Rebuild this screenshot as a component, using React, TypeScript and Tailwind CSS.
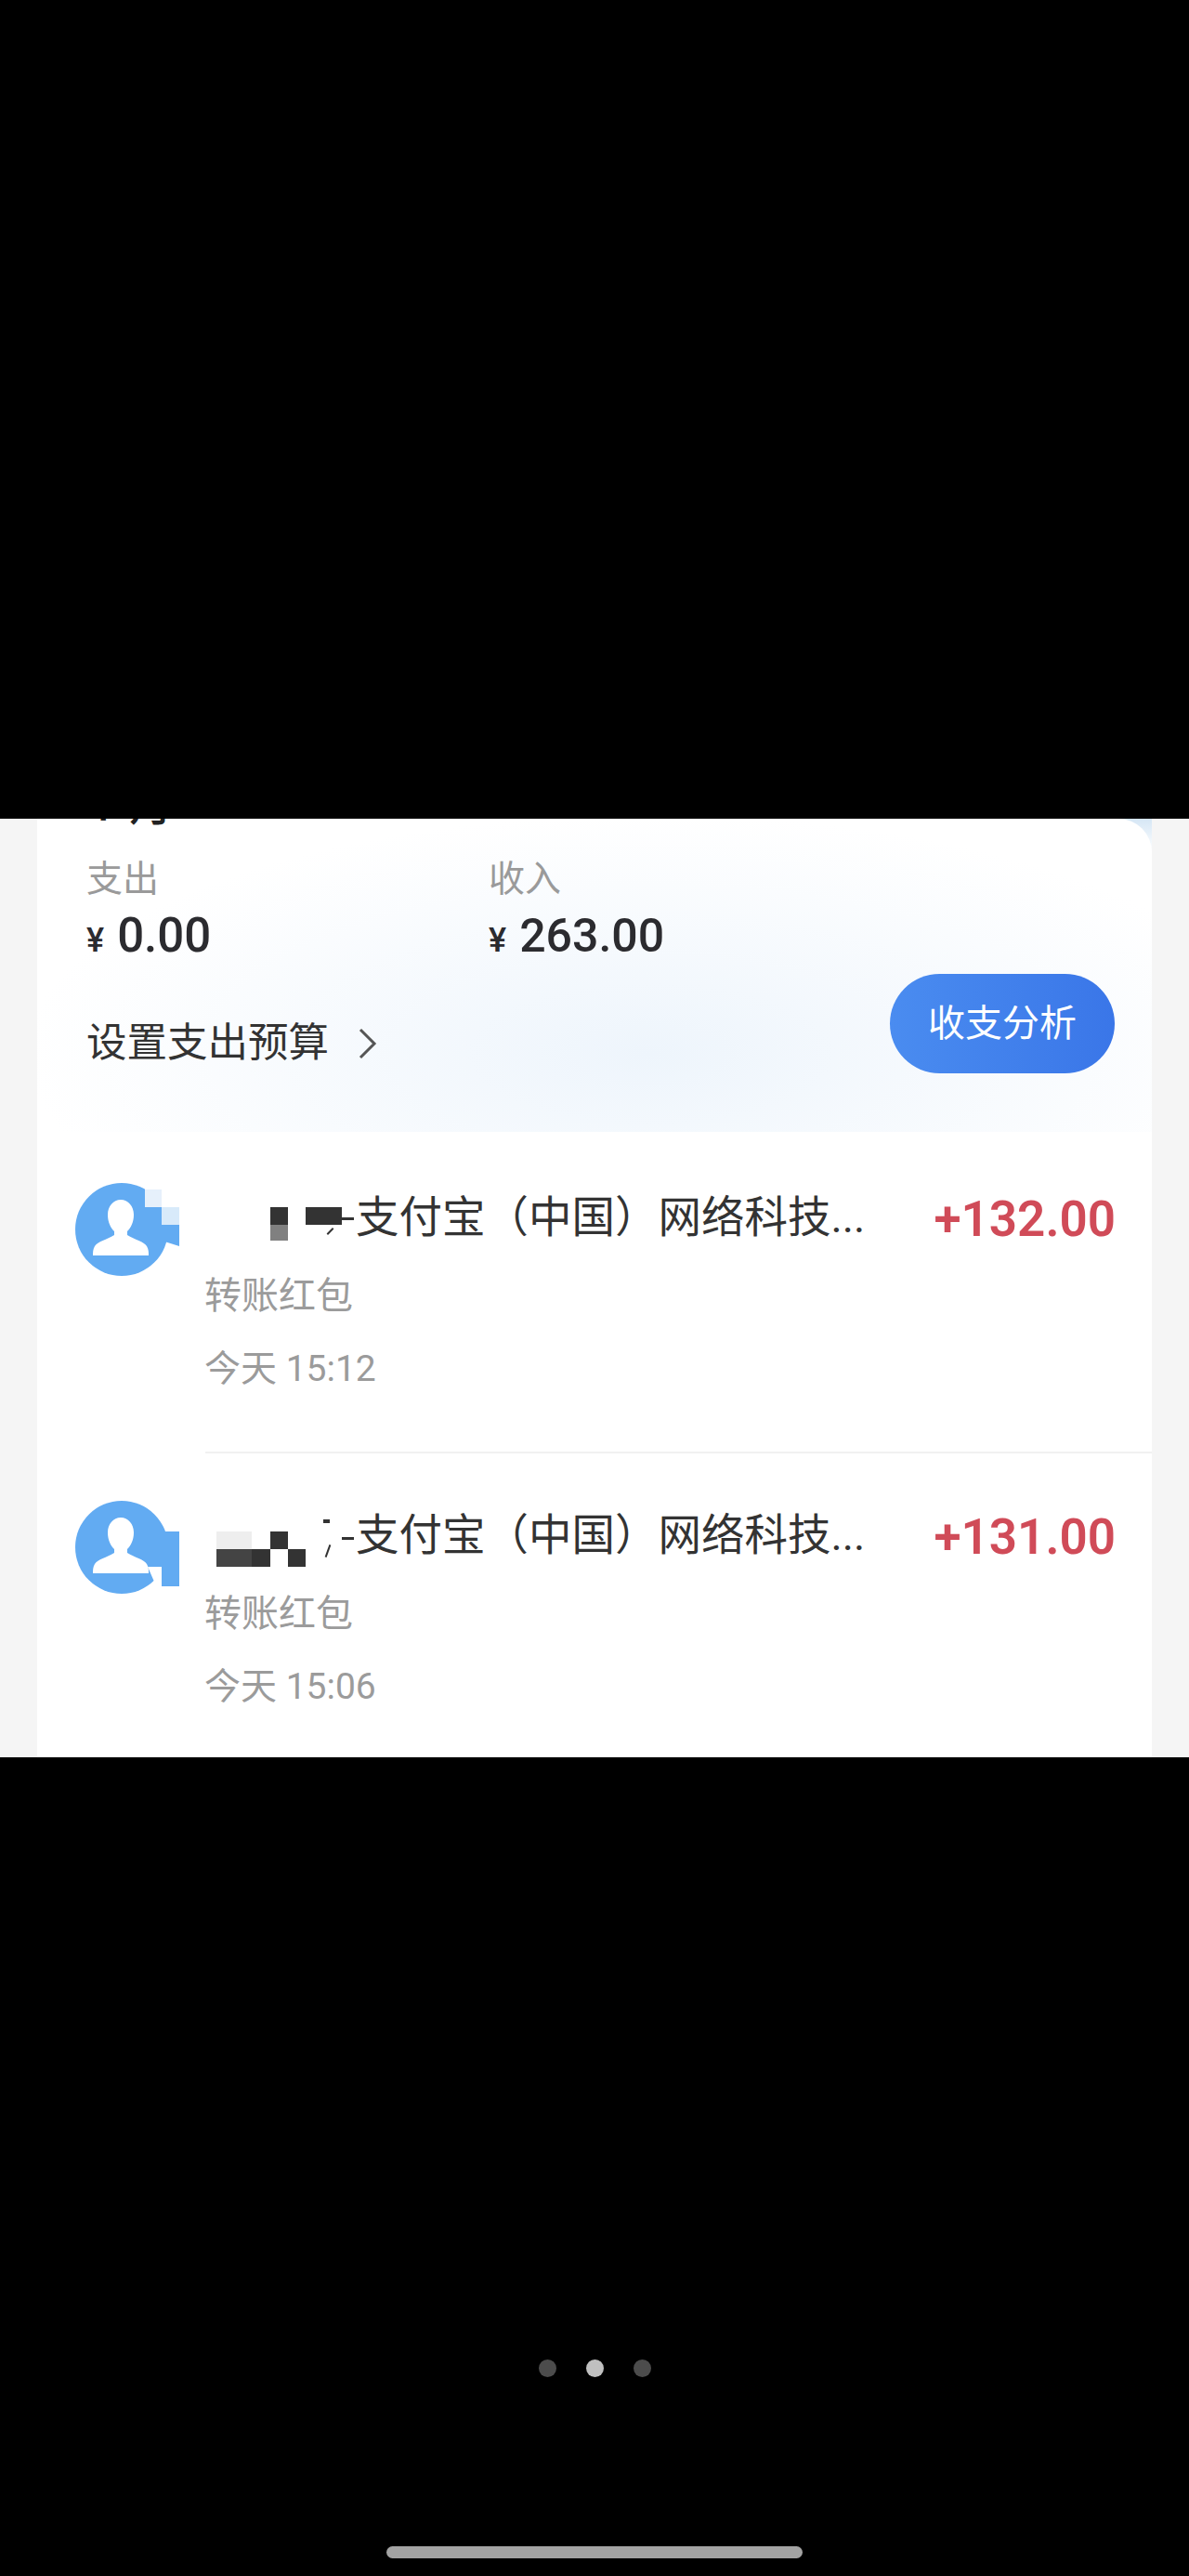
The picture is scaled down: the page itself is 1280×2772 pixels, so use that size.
const sans = 'font-["Roboto","Noto_Sans_CJK_SC",sans-serif]'

function Avatar({ mosaic }: { mosaic: 'a' | 'b' }) {
  return (
    <svg width="120" height="110" viewBox="0 0 120 110" className="shrink-0">
      <circle cx="52" cy="51" r="50" fill="#62abf2" />
      {mosaic === 'a' ? (
        <>
          <rect x="77" y="0" width="38" height="27" fill="#fff" />
          <rect x="77" y="8" width="18" height="19" fill="#e6f0fb" />
          <rect x="95" y="27" width="19" height="19" fill="#d8eafa" />
          <path d="M95 46h19v23l-19-6z" fill="#62abf2" />
        </>
      ) : (
        <>
          <rect x="95" y="34" width="19" height="59" fill="#62abf2" />
          <path d="M80 72h15v16h-8z" fill="#fff" />
        </>
      )}
      <path
        d="M51 19c-8 0-14 7-14 16 0 8 3 14 7 18v4c-8 5-18 7-21 12-2 3-2 7-2 10h60c0-3 0-7-2-10-3-5-13-7-21-12v-4c4-4 7-10 7-18 0-9-6-16-14-16z"
        fill="#fff"
      />
    </svg>
  )
}

function Row({ amount, time, mosaic, divider }: { amount: string; time: string; mosaic: 'a' | 'b'; divider?: boolean }) {
  return (
    <div className="relative h-[342px] pt-[54px] pl-[39px] pr-[39px]">
      <div className="flex">
        <Avatar mosaic={mosaic} />
        <div className="flex-1 pl-[21px] pt-[8px]">
          <div className="flex items-start justify-between">
            <div className="relative h-[60px] whitespace-nowrap pl-[163px] text-[46.5px] leading-[60px] text-[#333]">
              支付宝（中国）网络科技...
              {mosaic === 'a' ? (
                <>
                  <span className="absolute left-[71px] top-[19px] h-[19px] w-[19px] bg-[#333]" />
                  <span className="absolute left-[71px] top-[38px] h-[17px] w-[19px] bg-[#808080]" />
                  <span className="absolute left-[109px] top-[19px] h-[19px] w-[39px] bg-[#333]" />
                  <span className="absolute left-[148px] top-[30px] h-[3px] w-[13px] bg-[#333]" />
                  <span className="absolute left-[131px] top-[44px] h-[2px] w-[9px] -rotate-45 bg-[#333]" />
                </>
              ) : (
                <>
                  <span className="absolute left-[13px] top-[26px] h-[19px] w-[38px] bg-[#eeeeee]" />
                  <span className="absolute left-[13px] top-[45px] h-[19px] w-[38px] bg-[#444]" />
                  <span className="absolute left-[51px] top-[45px] h-[19px] w-[20px] bg-[#333]" />
                  <span className="absolute left-[71px] top-[26px] h-[19px] w-[19px] bg-[#333]" />
                  <span className="absolute left-[90px] top-[45px] h-[19px] w-[19px] bg-[#333]" />
                  <span className="absolute left-[148px] top-[32px] h-[3px] w-[13px] bg-[#333]" />
                  <span className="absolute left-[128px] top-[13px] h-[4px] w-[7px] bg-[#333]" />
                  <span className="absolute left-[126px] top-[46px] h-[2px] w-[14px] -rotate-[70deg] bg-[#333]" />
                </>
              )}
            </div>
            <span className="mt-[2px] text-[53px] leading-[60px] font-semibold text-[#d04b58]">{amount}</span>
          </div>
          <p className="mt-[33px] text-[40px] leading-[40px] text-[#9b9b9b]">转账红包</p>
          <p className="mt-[38px] text-[39px] leading-[40px] text-[#9b9b9b]">{time}</p>
        </div>
      </div>
      {divider && <div className="absolute -bottom-[4px] left-[181px] right-0 h-[2px] bg-[#f1f1f1]" />}
    </div>
  )
}

export default function App() {
  return (
    <div className={`${sans} flex h-[2772px] flex-col bg-black`}>
      <div className="mt-[881px] h-[1010px] overflow-hidden bg-[#f5f5f5] px-[40px]">
        <div className="h-full overflow-hidden bg-white">
          {/* 右上角圆角后面露出的浅蓝 */}
          <div className="bg-[linear-gradient(to_bottom,#d5e6f5,#ffffff_36px)]">
            <div className="h-[337px] overflow-hidden rounded-tr-[36px] bg-white bg-[radial-gradient(ellipse_at_55%_75%,#eef5fc,#ffffff_72%)] pl-[53px] pr-[54px]">
              {/* 被裁掉的月份标题 */}
              <p className="-mt-[37px] h-[46px] text-[46px] leading-[46px] font-medium text-[#222]">
                4<span className="ml-[20px]">月</span>
              </p>
              <div className="mt-[33px] flex">
                <div className="w-[433px]">
                  <p className="text-[39px] leading-[46px] text-[#9a9a9a]">支出</p>
                  <p className="mt-[13px] flex items-baseline gap-[14px] text-[#2b2b2f]">
                    <span className="text-[36px] leading-[50px] font-medium">¥</span>
                    <span className="text-[51px] leading-[50px] font-medium">0.00</span>
                  </p>
                </div>
                <div>
                  <p className="text-[39px] leading-[46px] text-[#9a9a9a]">收入</p>
                  <p className="mt-[13px] flex items-baseline gap-[14px] text-[#2b2b2f]">
                    <span className="text-[36px] leading-[50px] font-medium">¥</span>
                    <span className="text-[50px] leading-[50px] font-medium">263.00</span>
                  </p>
                </div>
              </div>
              <div className="mt-[11px] flex items-start justify-between">
                <div className="mt-[50px] flex items-center gap-[32px] text-[43.5px] leading-[50px] text-[#333]">
                  设置支出预算
                  <svg width="20" height="34" viewBox="0 0 20 34" fill="none" stroke="#555" strokeWidth="3">
                    <path d="M2 2l15 15L2 32" />
                  </svg>
                </div>
                <button className="-mr-[14px] h-[107px] w-[242px] rounded-full bg-gradient-to-r from-[#4a8cf0] to-[#3a76e8] text-[40px] text-white">
                  收支分析
                </button>
              </div>
            </div>
          </div>
          <Row amount="+132.00" time="今天 15:12" mosaic="a" divider />
          <Row amount="+131.00" time="今天 15:06" mosaic="b" />
        </div>
      </div>
      <div className="mt-[648px] flex justify-center gap-[32px]">
        <span className="h-[19px] w-[19px] rounded-full bg-[#4c4c4c]" />
        <span className="h-[19px] w-[19px] rounded-full bg-[#c0c0c0]" />
        <span className="h-[19px] w-[19px] rounded-full bg-[#4c4c4c]" />
      </div>
      <div className="mt-[182px] flex justify-center">
        <div className="h-[13px] w-[448px] rounded-full bg-[#a3a3a3]" />
      </div>
    </div>
  )
}
